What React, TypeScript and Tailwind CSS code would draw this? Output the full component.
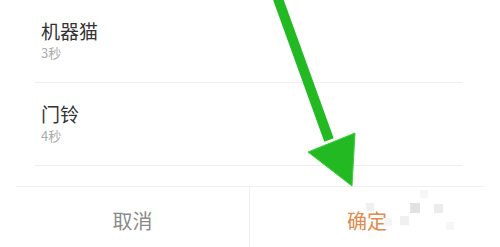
const sounds = [
  { name: '机器猫', length: '3秒' },
  { name: '门铃', length: '4秒' },
];

// faint mosaic watermark in the lower right corner
const tiles = [
  { x: 366, y: 203, s: 8, c: '#f0f0f0' },
  { x: 410, y: 203, s: 10, c: '#e2e2e2' },
  { x: 434, y: 204, s: 9, c: '#ececec' },
  { x: 400, y: 216, s: 9, c: '#f0f0f0' },
  { x: 420, y: 190, s: 8, c: '#f6f6f6' },
  { x: 384, y: 218, s: 8, c: '#f5f5f5' },
  { x: 446, y: 222, s: 8, c: '#f6f6f6' },
];

const App = () => {
  return (
    <div
      className="relative w-[500px] h-[247px] overflow-hidden bg-white"
      style={{ fontFamily: '"Noto Sans CJK SC", "Noto Sans", sans-serif' }}
    >
      <ul>
        {sounds.map((s) => (
          <li key={s.name} className="ml-[35px] mr-[37px] h-[83px] border-b border-[#efefef] pl-[6px] pt-[19px]">
            <div className="text-[19px] leading-[24px] text-[#333333]">{s.name}</div>
            <div className="mt-[2px] text-[13px] leading-[16px] text-[#ababab]">{s.length}</div>
          </li>
        ))}
      </ul>

      <div className="mx-[16px] mt-[20px] grid grid-cols-2 border-t border-[#efefef]">
        <button className="h-[68px] flex items-center justify-center border-r border-[#efefef] text-[20px] text-[#8a8a8a]">
          取消
        </button>
        <button className="h-[68px] flex items-center justify-center text-[20px] text-[#e08a4c]">
          确定
        </button>
      </div>

      {tiles.map((t, i) => (
        <div
          key={i}
          className="absolute"
          style={{ left: t.x, top: t.y, width: t.s, height: t.s, background: t.c }}
        />
      ))}

      <svg className="absolute left-0 top-0 pointer-events-none" width="500" height="247" viewBox="0 0 500 247">
        <line x1="277" y1="-4" x2="329" y2="140" stroke="#22b922" strokeWidth="10" />
        <polygon points="308,152 355,133 352,186" fill="#22b922" stroke="#3ccf3c" strokeWidth="1" strokeLinejoin="round" />
      </svg>
    </div>
  );
};

export default App;
